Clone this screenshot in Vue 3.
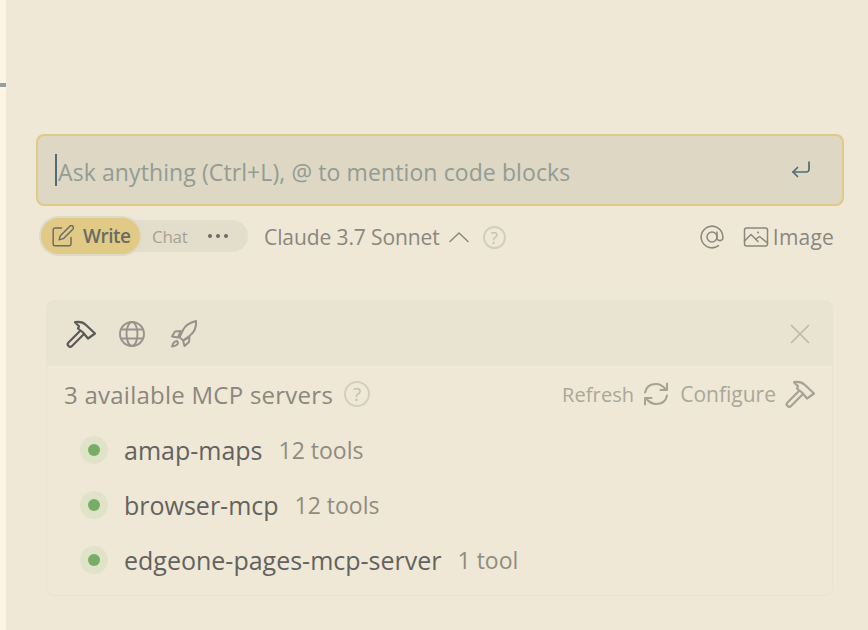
<script setup>
const servers = [
  { name: 'amap-maps', tools: '12 tools' },
  { name: 'browser-mcp', tools: '12 tools' },
  { name: 'edgeone-pages-mcp-server', tools: '1 tool' },
]
</script>

<template>
  <div class="page">
    <aside class="strip"><div class="tick"></div></aside>
    <main class="main">
      <div class="input">
        <span class="caret"></span>
        <span class="placeholder">Ask anything (Ctrl+L), @ to mention code blocks</span>
        <svg class="enter" width="22" height="22" viewBox="0 0 22 22" fill="none" stroke="currentColor" stroke-width="1.7" stroke-linecap="round" stroke-linejoin="round">
          <path d="M19 3v7.500a2.500 2.500 0 0 1-2.500 2.500H3" />
          <path d="M7.500 8.500 3 13l4.500 4.500" />
        </svg>
      </div>

      <div class="toolbar">
        <div class="modes">
          <div class="mode-write">
            <svg width="22" height="22" viewBox="2 1.500 18.500 18.500" fill="none" stroke="currentColor" stroke-width="1.200" stroke-linecap="round" stroke-linejoin="round">
              <path d="M10 4H4.500A1.500 1.500 0 0 0 3 5.500v12A1.500 1.500 0 0 0 4.500 19h12a1.500 1.500 0 0 0 1.500-1.500V12" />
              <path d="M17 2.500a1.700 1.700 0 0 1 2.500 2.500L11.500 13l-3.500 1 1-3.500z" />
            </svg>
            <span>Write</span>
          </div>
          <span class="mode-chat">Chat</span>
          <span class="dots"><i></i><i></i><i></i></span>
        </div>
        <span class="model">Claude 3.7 Sonnet</span>
        <svg class="chevron" width="22" height="14" viewBox="0 0 22 14" fill="none" stroke="currentColor" stroke-width="1.500" stroke-linecap="round" stroke-linejoin="round">
          <path d="M2 11.500 11 3l9 8.500" />
        </svg>
        <span class="help model-help">?</span>
        <div class="spacer"></div>
        <svg class="at" width="26" height="26" viewBox="0 0 24 24" fill="none" stroke="currentColor" stroke-width="1.400" stroke-linecap="round">
          <circle cx="12" cy="12" r="4.600" />
          <path d="M16.600 7.500v6a2.900 2.900 0 0 0 5.400 0V12a10 10 0 1 0-4 8" />
        </svg>
        <svg class="image-icon" width="26" height="22" viewBox="0 0 26 22" fill="none" stroke="currentColor" stroke-width="1.500" stroke-linecap="round" stroke-linejoin="round">
          <rect x="1.500" y="2" width="23" height="18" rx="2" />
          <path d="M1.500 15 8 8.500l7 7" />
          <path d="M13 13l3.500-2.500 8 6.500" />
          <circle cx="15" cy="6.500" r="1" fill="currentColor" stroke="none" />
        </svg>
        <span class="image-label">Image</span>
      </div>

      <section class="panel">
        <header class="tabs">
          <svg class="tab-hammer" width="32" height="30" viewBox="0 0 32 30" fill="none" stroke="currentColor" stroke-width="2.200" stroke-linejoin="round" stroke-linecap="round">
            <path d="M15 12 3.500 23.500a2.400 2.400 0 0 0 3.500 3.500L18.500 15.500" />
            <path d="M10 3.200C14 2.500 18 3 21 6l9 8.500-7 5-5-6-5-4 1-2.300z" />
          </svg>
          <svg class="tab-globe" width="28" height="28" viewBox="0 0 28 28" fill="none" stroke="currentColor" stroke-width="1.900">
            <circle cx="14" cy="14" r="12" />
            <ellipse cx="14" cy="14" rx="5.500" ry="12" />
            <path d="M3.500 9.500h21M3.500 18.500h21" />
          </svg>
          <svg class="tab-rocket" width="32" height="32" viewBox="0 0 32 32" fill="none" stroke="currentColor" stroke-width="2" stroke-linejoin="round">
            <path d="M11.500 19.500 15 12c2.500-5 7-7.500 13-9 .5 6-1.500 11-6 14.500l-6.500 5z" />
            <path d="M12.500 13 7 13.500 4 18.500l6 1z" />
            <path d="M21.500 19l-.5 5-4.500 4-1.500-5.500z" />
            <path d="M9 23c-2 0-4 2-5 5.500 3-.5 6-2 6-3.500 0-1-.5-1.500-1-2z" />
          </svg>
          <div class="spacer"></div>
          <svg class="close" width="20" height="20" viewBox="0 0 20 20" fill="none" stroke="currentColor" stroke-width="1.500" stroke-linecap="round">
            <path d="M1.500 1.500l17 17M18.500 1.500l-17 17" />
          </svg>
        </header>

        <div class="summary">
          <span class="summary-title">3 available MCP servers</span>
          <span class="help summary-help">?</span>
          <div class="spacer"></div>
          <span class="action">Refresh</span>
          <svg class="refresh" width="28" height="28" viewBox="0 0 28 28" fill="none" stroke="currentColor" stroke-width="2" stroke-linecap="round" stroke-linejoin="round">
            <path d="M3 12.500C4 7.500 8 4 14 4c4 0 7 2 10 5.500" />
            <path d="M25 3.500v6.500h-6.500" />
            <path d="M25 15.500C24 20.500 20 24 14 24c-4 0-7-2-10-5.500" />
            <path d="M3 24.500V18h6.500" />
          </svg>
          <span class="action configure">Configure</span>
          <svg class="config-hammer" width="32" height="30" viewBox="0 0 32 30" fill="none" stroke="currentColor" stroke-width="2.200" stroke-linejoin="round" stroke-linecap="round">
            <path d="M15 12 3.500 23.500a2.400 2.400 0 0 0 3.500 3.500L18.500 15.500" />
            <path d="M10 3.200C14 2.500 18 3 21 6l9 8.500-7 5-5-6-5-4 1-2.300z" />
          </svg>
        </div>

        <ul class="servers">
          <li v-for="server in servers" :key="server.name" class="server">
            <span class="status"><i></i></span>
            <span class="server-name">{{ server.name }}</span>
            <span class="server-tools">{{ server.tools }}</span>
          </li>
        </ul>
      </section>
    </main>
  </div>
</template>

<style scoped>
.page {
  display: flex;
  width: 868px;
  height: 630px;
  overflow: hidden;
  background: #efe8d6;
  font-family: "Open Sans", "Noto Sans", sans-serif;
  color: #8a877e;
}
.strip {
  width: 6px;
  flex: none;
  background: #fdf5e3;
}
.tick {
  height: 4px;
  margin-top: 83px;
  background: #93a09f;
}
.main {
  flex: 1;
  min-width: 0;
  padding: 134px 24px 0 30px;
}
.input {
  display: flex;
  align-items: center;
  height: 72px;
  box-sizing: border-box;
  padding: 0 30px 0 17px;
  background: #ddd7c3;
  border: 2px solid #e0ca85;
  border-radius: 8px;
}
.caret {
  width: 2px;
  height: 32px;
  margin-right: 1px;
  background: #4f6b78;
}
.placeholder {
  flex: 1;
  padding-top: 3px;
  font-size: 23px;
  color: #929c94;
  letter-spacing: 0.1px;
}
.enter {
  color: #4f6b78;
}
.toolbar {
  display: flex;
  align-items: center;
  height: 38px;
  margin-top: 12px;
  padding: 0 10px 0 4px;
}
.modes {
  display: flex;
  align-items: center;
  width: 208px;
  height: 32px;
  margin-top: -2px;
  background: #e3ddcc;
  border-radius: 16px;
}
.mode-write {
  display: flex;
  align-items: center;
  gap: 9px;
  box-sizing: border-box;
  width: 99px;
  height: 36px;
  padding-left: 11px;
  margin-left: 1px;
  background: #e0ca85;
  border-radius: 18px;
  box-shadow: 0 0 0 2px #dfd9c8;
  color: #6b6a66;
  font-size: 19px;
  font-weight: 600;
  letter-spacing: -0.5px;
}
.mode-chat {
  margin-left: 12px;
  font-size: 17px;
  color: #a5a294;
  letter-spacing: -0.3px;
}
.dots {
  display: flex;
  gap: 4px;
  margin-left: 21px;
}
.dots i {
  width: 4px;
  height: 4px;
  border-radius: 50%;
  background: #6b6a66;
}
.model {
  margin-left: 16px;
  font-size: 21px;
  letter-spacing: -0.1px;
}
.chevron {
  margin-left: 8px;
}
.help {
  display: inline-flex;
  align-items: center;
  justify-content: center;
  box-sizing: border-box;
  border: 2px solid #d3cebf;
  border-radius: 50%;
  color: #c4bfb0;
}
.model-help {
  width: 23px;
  height: 23px;
  margin-left: 13px;
  font-size: 17px;
}
.spacer {
  flex: 1;
}
.at {
  color: #8a877e;
}
.image-icon {
  margin-left: 18px;
  color: #8a877e;
}
.image-label {
  margin-left: 4px;
  font-size: 21px;
  letter-spacing: 0.2px;
}
.panel {
  box-sizing: border-box;
  height: 296px;
  margin: 44px 11px 0 10px;
  border: 1px solid #e9e3d2;
  border-radius: 8px;
  overflow: hidden;
}
.tabs {
  display: flex;
  align-items: center;
  height: 65px;
  padding: 0 22px 0 18px;
  background: #e9e3d2;
}
.tab-hammer {
  color: #5a5a58;
}
.tab-globe {
  margin-left: 21px;
  color: #95938b;
}
.tab-rocket {
  margin-left: 22px;
  color: #95938b;
}
.close {
  color: #b9b5a8;
}
.summary {
  display: flex;
  align-items: center;
  height: 56px;
  padding: 0 16px 0 17px;
}
.summary-title {
  font-size: 24px;
  letter-spacing: 0.25px;
}
.summary-help {
  width: 26px;
  height: 26px;
  margin-left: 11px;
  font-size: 19px;
}
.action {
  font-size: 20px;
  color: #aaa79a;
  letter-spacing: 0.1px;
}
.refresh {
  margin-left: 8px;
  color: #a5a296;
}
.configure {
  margin-left: 10px;
  font-size: 21px;
  letter-spacing: 0;
}
.config-hammer {
  margin-left: 8px;
  color: #a5a296;
}
.servers {
  margin: 0;
  padding: 0 0 0 33px;
  list-style: none;
}
.server {
  display: flex;
  align-items: center;
  height: 55px;
}
.status {
  display: flex;
  align-items: center;
  justify-content: center;
  width: 28px;
  height: 28px;
  border-radius: 50%;
  background: #e1e3c9;
}
.status i {
  width: 12px;
  height: 12px;
  border-radius: 50%;
  background: #78ad66;
}
.server-name {
  margin-left: 16px;
  font-size: 25px;
  color: #636260;
}
.server-tools {
  margin-left: 16px;
  font-size: 23px;
  color: #8f8c82;
}
</style>
